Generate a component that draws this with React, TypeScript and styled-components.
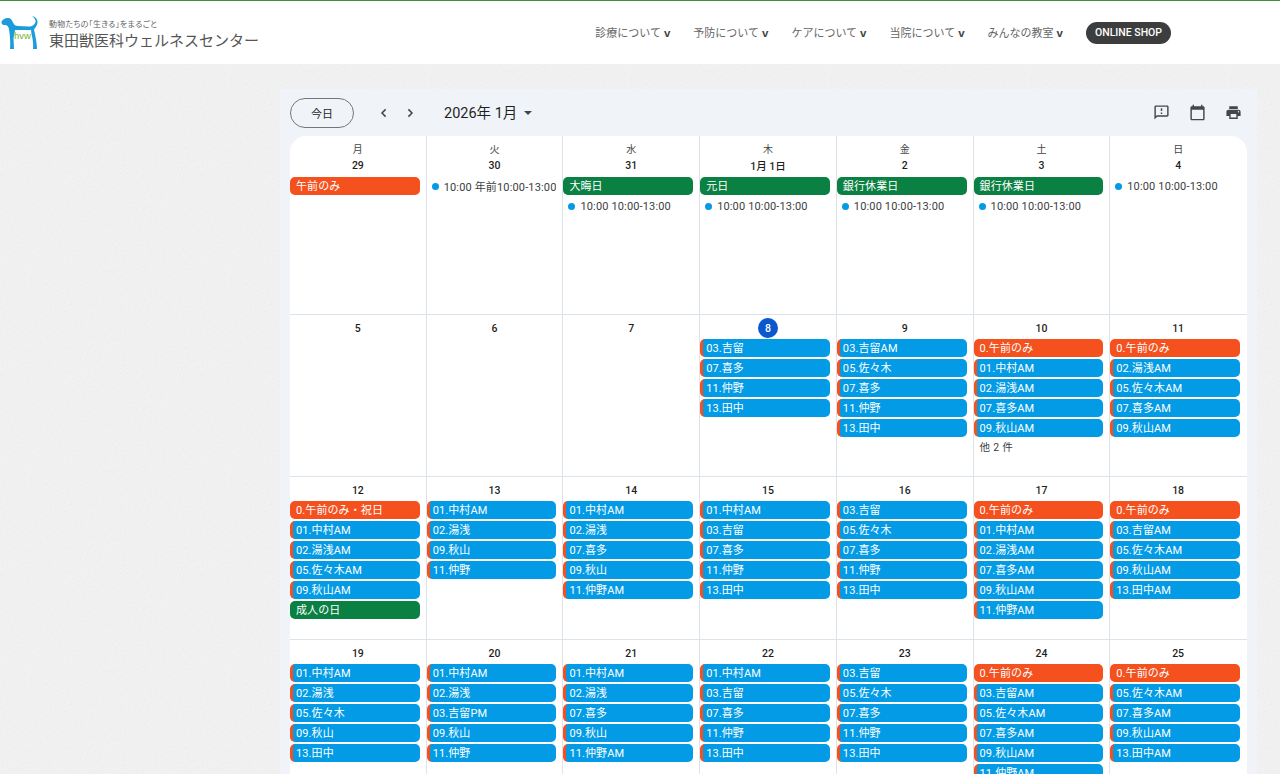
import React from "react";
import styled, { createGlobalStyle } from "styled-components";

const noise = `url("data:image/svg+xml,%3Csvg xmlns='http://www.w3.org/2000/svg' width='200' height='200'%3E%3Cfilter id='n'%3E%3CfeTurbulence type='fractalNoise' baseFrequency='0.7' numOctaves='2' seed='4'/%3E%3CfeColorMatrix values='0 0 0 0 0.55 0 0 0 0 0.55 0 0 0 0 0.55 0 0 0 0.22 -0.05'/%3E%3C/filter%3E%3Crect width='200' height='200' filter='url(%23n)'/%3E%3C/svg%3E")`;

const Global = createGlobalStyle`
  html, body { margin: 0; padding: 0; height: 100%; overflow: hidden; }
  body { font-family: Roboto, "Noto Sans CJK JP", sans-serif; background: #f3f3f3; }
  #root { height: 100%; }
`;

const Page = styled.div`
  height: 100vh;
  display: flex;
  flex-direction: column;
  overflow: hidden;
  background-color: #f3f3f3;
  background-image: ${noise};
`;

const Header = styled.header`
  flex: 0 0 64px;
  box-sizing: border-box;
  background: #fff;
  border-top: 1px solid #3a9437;
  display: flex;
  align-items: center;
  padding: 0 109px 0 1px;
`;

const Brand = styled.div`
  display: flex;
  align-items: center;
  gap: 10px;
  flex: 1;
`;

const BrandText = styled.div`
  display: flex;
  flex-direction: column;
  gap: 1px;
  padding-top: 4px;
  font-family: "Noto Sans CJK JP", sans-serif;
`;

const Tagline = styled.span`
  font-size: 8px;
  line-height: 10px;
  color: #666;
  letter-spacing: 0.25px;
  font-feature-settings: "palt";
  white-space: nowrap;
`;

const BrandName = styled.span`
  font-size: 15px;
  line-height: 20px;
  color: #555;
  font-weight: 400;
  white-space: nowrap;
`;

const Nav = styled.nav`
  display: flex;
  align-items: center;
  gap: 23px;
`;

const NavItem = styled.a`
  font-family: "Noto Sans CJK JP", sans-serif;
  font-size: 11px;
  color: #666;
  display: flex;
  align-items: baseline;
  gap: 3px;
  white-space: nowrap;
  margin-top: -1px;
`;

const Caret = styled.span`
  font-family: "Liberation Sans", sans-serif;
  font-size: 11.5px;
  font-weight: 700;
  color: #444;
`;

const Shop = styled.a`
  width: 85px;
  height: 22px;
  border-radius: 11px;
  background: #3d3d3d;
  color: #fff;
  font-family: Roboto, sans-serif;
  font-size: 10.5px;
  font-weight: 500;
  display: flex;
  align-items: center;
  justify-content: center;
  white-space: nowrap;
`;

const Main = styled.main`
  flex: 1;
  min-height: 0;
  padding: 25px 23px 0 280px;
  display: flex;
`;

const Panel = styled.section`
  flex: 1;
  background: #f0f4f9;
  display: flex;
  flex-direction: column;
  min-width: 0;
`;

const Toolbar = styled.div`
  flex: 0 0 47px;
  display: flex;
  align-items: center;
  padding: 0 6px 0 10px;
`;

const Today = styled.button`
  width: 64px;
  height: 30px;
  box-sizing: border-box;
  border: 1px solid #747775;
  border-radius: 15px;
  background: transparent;
  font-family: "Noto Sans CJK JP", sans-serif;
  font-size: 11px;
  color: #1f1f1f;
  padding: 0;
  margin-right: 17px;
`;

const IconBtn = styled.span`
  width: 26px;
  height: 26px;
  display: flex;
  align-items: center;
  justify-content: center;
  color: #444746;
`;

const ToolIcon = styled.span`
  width: 36px;
  height: 36px;
  display: flex;
  align-items: center;
  justify-content: center;
  color: #444746;
`;

const Title = styled.h2`
  margin: 0 0 2px 21px;
  font-family: Roboto, "Noto Sans CJK JP", sans-serif;
  font-size: 14.5px;
  font-weight: 400;
  color: #1f1f1f;
  white-space: nowrap;
`;

const Spacer = styled.div`
  flex: 1;
`;

const Arrow = styled.span`
  width: 0;
  height: 0;
  margin: 1px 0 0 7px;
  border-left: 4px solid transparent;
  border-right: 4px solid transparent;
  border-top: 4px solid #444746;
`;

const Board = styled.div`
  margin: 0 10px;
  background: #fff;
  border-radius: 16px 16px 0 0;
  flex: 1;
  display: grid;
  grid-template-columns: repeat(7, minmax(0, 1fr));
  grid-template-rows: 178px 162px 163px minmax(0, 1fr);
  min-height: 0;
  overflow: hidden;
`;

const Cell = styled.div<{ $last: boolean; $top: boolean }>`
  min-width: 0;
  box-sizing: border-box;
  border-right: ${(p) => (p.$last ? "none" : "1px solid #dde3ea")};
  border-top: ${(p) => (p.$top ? "none" : "1px solid #dde3ea")};
  padding: ${(p) => (p.$top ? "6px" : "3px")} ${(p) => (p.$last ? "7px" : "6px")} 0 0;
  display: flex;
  flex-direction: column;
  overflow: hidden;
`;

const Weekday = styled.div`
  flex: none;
  height: 14px;
  line-height: 14px;
  text-align: center;
  font-family: "Noto Sans CJK JP", sans-serif;
  font-size: 10px;
  color: #444746;
  margin-right: -6px;
`;

const DateLabel = styled.div<{ $top: boolean }>`
  flex: none;
  height: ${(p) => (p.$top ? "18px" : "20px")};
  margin: 0 -6px ${(p) => (p.$top ? "3px" : "1px")} 0;
  display: flex;
  align-items: center;
  justify-content: center;
  font-family: Roboto, "Noto Sans CJK JP", sans-serif;
  font-size: 10.5px;
  font-weight: 500;
  color: #1f1f1f;
`;

const TodayMark = styled.span`
  width: 20px;
  height: 20px;
  border-radius: 50%;
  background: #0b57d0;
  color: #fff;
  display: flex;
  align-items: center;
  justify-content: center;
`;

const Events = styled.div`
  flex: none;
  display: flex;
  flex-direction: column;
  gap: 2px;
`;

const kinds = { o: "#f4511e", g: "#0b8043", b: "#039be5" } as const;

const Chip = styled.div<{ $kind: "o" | "g" | "b" }>`
  height: 18px;
  line-height: 18px;
  box-sizing: border-box;
  border-radius: 5px;
  background: ${(p) => kinds[p.$kind]};
  border-left: ${(p) => (p.$kind === "b" ? "3px solid #f4511e" : "none")};
  padding: 1px 0 0 ${(p) => (p.$kind === "b" ? "3px" : "6px")};
  font-family: Roboto, "Noto Sans CJK JP", sans-serif;
  font-size: 11px;
  font-weight: 400;
  letter-spacing: 0.1px;
  color: #fff;
  white-space: nowrap;
  overflow: hidden;
`;

const Timed = styled.div`
  height: 18px;
  display: flex;
  align-items: center;
  gap: 5px;
  padding-left: 5px;
  font-family: Roboto, "Noto Sans CJK JP", sans-serif;
  font-size: 11px;
  letter-spacing: 0.15px;
  color: #3c4043;
  white-space: nowrap;
  overflow: hidden;
`;

const Dot = styled.i`
  width: 7px;
  height: 7px;
  border-radius: 50%;
  background: #039be5;
  flex: none;
`;

const More = styled.div`
  height: 18px;
  line-height: 18px;
  padding-left: 6px;
  font-family: Roboto, "Noto Sans CJK JP", sans-serif;
  font-size: 10.5px;
  letter-spacing: 0.3px;
  color: #3c4043;
`;

type Day = { d: string; today?: boolean; ev: string[] };

const T = "t:10:00 10:00-13:00";
const W = (s: string) => s.split(" ").filter(Boolean);

const days: Day[] = [
  { d: "29", ev: ["o:午前のみ"] },
  { d: "30", ev: ["t:10:00 年前10:00-13:00"] },
  { d: "31", ev: ["g:大晦日", T] },
  { d: "1月 1日", ev: ["g:元日", T] },
  { d: "2", ev: ["g:銀行休業日", T] },
  { d: "3", ev: ["g:銀行休業日", T] },
  { d: "4", ev: [T] },
  { d: "5", ev: [] },
  { d: "6", ev: [] },
  { d: "7", ev: [] },
  { d: "8", today: true, ev: W("03.吉留 07.喜多 11.仲野 13.田中") },
  { d: "9", ev: W("03.吉留AM 05.佐々木 07.喜多 11.仲野 13.田中") },
  { d: "10", ev: [...W("o:0.午前のみ 01.中村AM 02.湯浅AM 07.喜多AM 09.秋山AM"), "m:他 2 件"] },
  { d: "11", ev: W("o:0.午前のみ 02.湯浅AM 05.佐々木AM 07.喜多AM 09.秋山AM") },
  { d: "12", ev: W("o:0.午前のみ・祝日 01.中村AM 02.湯浅AM 05.佐々木AM 09.秋山AM g:成人の日") },
  { d: "13", ev: W("01.中村AM 02.湯浅 09.秋山 11.仲野") },
  { d: "14", ev: W("01.中村AM 02.湯浅 07.喜多 09.秋山 11.仲野AM") },
  { d: "15", ev: W("01.中村AM 03.吉留 07.喜多 11.仲野 13.田中") },
  { d: "16", ev: W("03.吉留 05.佐々木 07.喜多 11.仲野 13.田中") },
  { d: "17", ev: W("o:0.午前のみ 01.中村AM 02.湯浅AM 07.喜多AM 09.秋山AM 11.仲野AM") },
  { d: "18", ev: W("o:0.午前のみ 03.吉留AM 05.佐々木AM 09.秋山AM 13.田中AM") },
  { d: "19", ev: W("01.中村AM 02.湯浅 05.佐々木 09.秋山 13.田中") },
  { d: "20", ev: W("01.中村AM 02.湯浅 03.吉留PM 09.秋山 11.仲野") },
  { d: "21", ev: W("01.中村AM 02.湯浅 07.喜多 09.秋山 11.仲野AM") },
  { d: "22", ev: W("01.中村AM 03.吉留 07.喜多 11.仲野 13.田中") },
  { d: "23", ev: W("03.吉留 05.佐々木 07.喜多 11.仲野 13.田中") },
  { d: "24", ev: W("o:0.午前のみ 03.吉留AM 05.佐々木AM 07.喜多AM 09.秋山AM 11.仲野AM") },
  { d: "25", ev: W("o:0.午前のみ 05.佐々木AM 07.喜多AM 09.秋山AM 13.田中AM") },
];

const weekdays = ["月", "火", "水", "木", "金", "土", "日"];
const nav = ["診療について", "予防について", "ケアについて", "当院について", "みんなの教室"];

const Logo = () => (
  <svg width="38" height="34" viewBox="1 15 38 34" aria-hidden>
    <path
      fill="#1b9ddb"
      d="M1.5 21 C2 19 5 17 8 17 C10.5 17 12 19 13 21.5 C14 24 15.5 25 18 25 L29 25.5 C32 25.5 35 23.5 35.5 21 C36 19 34.5 17 32 15 C36 16 38 19 37.5 22 C37 25 35 27 34 28.5 C35 33 37 42 37 48 L33 48 C33.5 44 33 39 31.5 33 L31 29 L15 29 L13.5 37 L14 48 L10 48 C10.5 42 10 32 8.5 26.5 C8 24.5 6 24 4 24 C2.5 24 1.2 23 1.5 21 Z"
    />
    <text x="14" y="38" fontFamily="Liberation Sans, sans-serif" fontSize="9.5" fill="#7ab51d">
      hvw
    </text>
  </svg>
);

const Chevron = ({ dir }: { dir: "l" | "r" }) => (
  <svg width="12" height="12" viewBox="0 0 12 12" fill="none" stroke="currentColor" strokeWidth="1.5">
    <path d={dir === "l" ? "M7.6 2.4 4 6l3.6 3.6" : "M4.4 2.4 8 6 4.4 9.6"} />
  </svg>
);

const Mi = ({ d }: { d: string }) => (
  <svg width="17" height="17" viewBox="0 0 24 24" fill="currentColor">
    <path d={d} />
  </svg>
);

const renderEvent = (e: string, i: number) => {
  if (e.startsWith("t:"))
    return (
      <Timed key={i}>
        <Dot />
        {e.slice(2)}
      </Timed>
    );
  if (e.startsWith("m:")) return <More key={i}>{e.slice(2)}</More>;
  if (e.startsWith("o:")) return <Chip key={i} $kind="o">{e.slice(2)}</Chip>;
  if (e.startsWith("g:")) return <Chip key={i} $kind="g">{e.slice(2)}</Chip>;
  return <Chip key={i} $kind="b">{e}</Chip>;
};

export default function App() {
  return (
    <Page>
      <Global />
      <Header>
        <Brand>
          <Logo />
          <BrandText>
            <Tagline>動物たちの「生きる」をまるごと</Tagline>
            <BrandName>東田獣医科ウェルネスセンター</BrandName>
          </BrandText>
        </Brand>
        <Nav>
          {nav.map((n) => (
            <NavItem key={n}>
              {n}
              <Caret>v</Caret>
            </NavItem>
          ))}
          <Shop>ONLINE SHOP</Shop>
        </Nav>
      </Header>
      <Main>
        <Panel>
          <Toolbar>
            <Today>今日</Today>
            <IconBtn>
              <Chevron dir="l" />
            </IconBtn>
            <IconBtn>
              <Chevron dir="r" />
            </IconBtn>
            <Title>2026年 1月</Title>
            <Arrow />
            <Spacer />
            <ToolIcon>
              <Mi d="M20 2H4c-1.1 0-2 .9-2 2v18l4-4h14c1.1 0 2-.9 2-2V4c0-1.1-.9-2-2-2zm0 14H5.17L4 17.17V4h16v12zM11 12h2v2h-2zm0-6h2v4h-2z" />
            </ToolIcon>
            <ToolIcon>
              <Mi d="M20 3h-1V1h-2v2H7V1H5v2H4c-1.1 0-2 .9-2 2v16c0 1.1.9 2 2 2h16c1.1 0 2-.9 2-2V5c0-1.1-.9-2-2-2zm0 18H4V8h16v13z" />
            </ToolIcon>
            <ToolIcon>
              <Mi d="M19 8H5c-1.66 0-3 1.34-3 3v6h4v4h12v-4h4v-6c0-1.66-1.34-3-3-3zm-3 11H8v-5h8v5zm3-7c-.55 0-1-.45-1-1s.45-1 1-1 1 .45 1 1-.45 1-1 1zm-1-9H6v4h12V3z" />
            </ToolIcon>
          </Toolbar>
          <Board>
            {days.map((day, i) => {
              const top = i < 7;
              return (
                <Cell key={day.d} $last={i % 7 === 6} $top={top}>
                  {top && <Weekday>{weekdays[i]}</Weekday>}
                  <DateLabel $top={top}>
                    {day.today ? <TodayMark>{day.d}</TodayMark> : day.d}
                  </DateLabel>
                  <Events>{day.ev.map(renderEvent)}</Events>
                </Cell>
              );
            })}
          </Board>
        </Panel>
      </Main>
    </Page>
  );
}
